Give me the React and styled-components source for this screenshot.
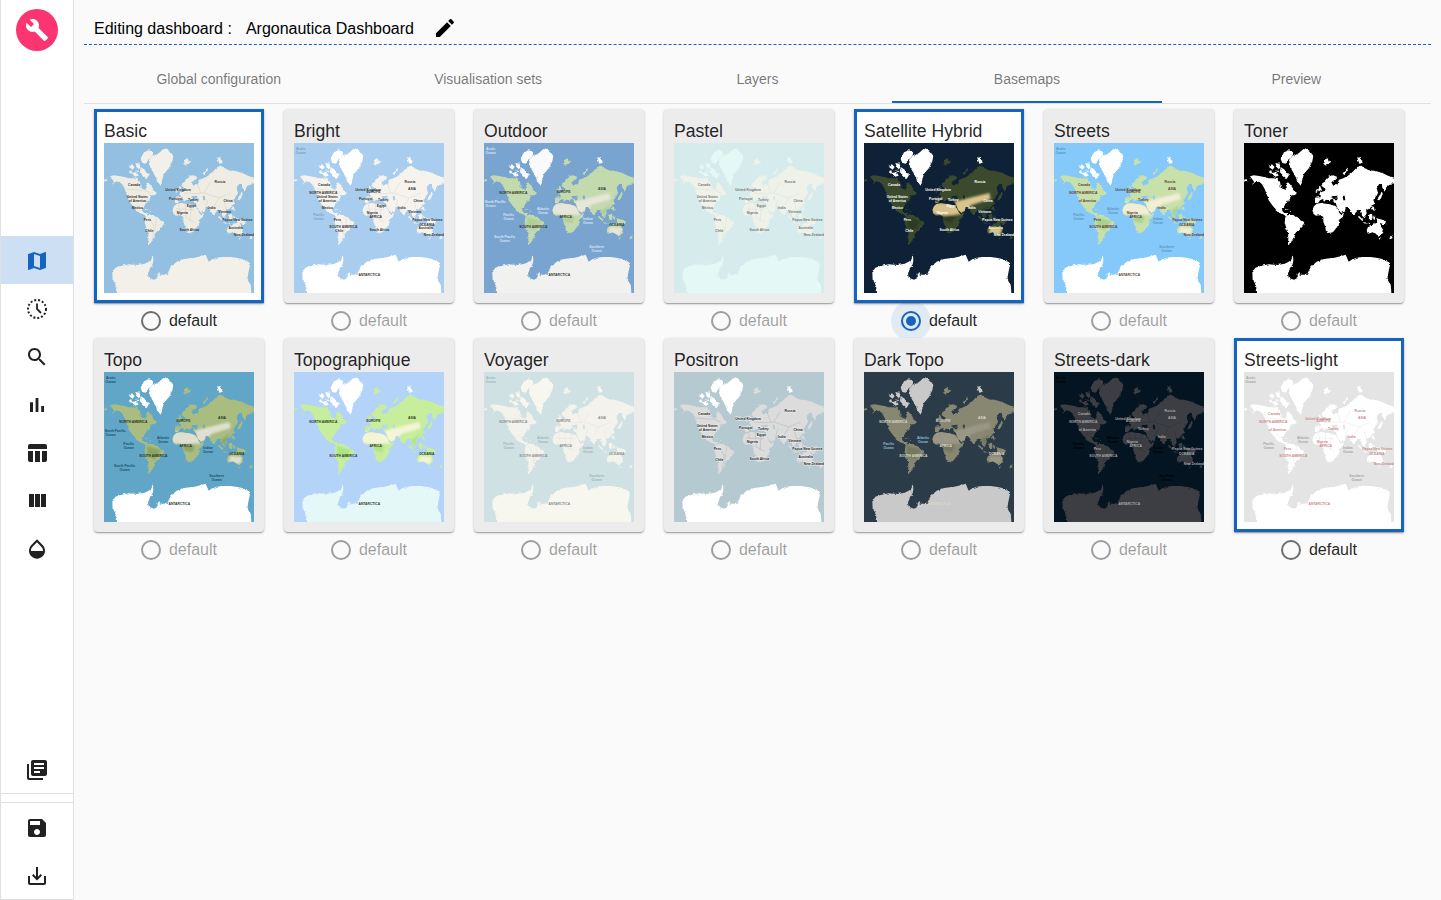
import React from "react";
import styled, { createGlobalStyle } from "styled-components";

const BLUE = "#1565c0";

const GlobalStyle = createGlobalStyle`
  html, body {
    margin: 0;
    padding: 0;
    background: #fafafa;
    font-family: "Liberation Sans", Arial, sans-serif;
    color: rgba(0, 0, 0, 0.87);
  }
  * { box-sizing: border-box; }
`;

const Page = styled.div`
  display: flex;
  height: 900px;
  overflow: hidden;
`;

const Sidebar = styled.aside`
  flex: none;
  width: 74px;
  height: 900px;
  display: flex;
  flex-direction: column;
  background: #fff;
  border-left: 1px solid #e0e0e0;
  border-right: 1px solid #e0e0e0;
  border-bottom: 1px solid #e0e0e0;
`;

const Logo = styled.div`
  width: 42px;
  height: 42px;
  margin: 9px 0 185px 15px;
  border-radius: 50%;
  background: #fb3571;
  color: #fff;
  display: flex;
  align-items: center;
  justify-content: center;
`;

const NavItem = styled.div`
  height: 48px;
  padding-top: 2px;
  display: flex;
  align-items: center;
  justify-content: center;
  color: ${(p) => (p.$active ? BLUE : "#212121")};
  background: ${(p) => (p.$active ? "#cddff2" : "transparent")};
`;

const SidebarBottom = styled.div`
  margin-top: auto;
`;

const UpperTools = styled.div`
  border-bottom: 1px solid #e0e0e0;
`;

const LowerTools = styled.div`
  margin-top: 8px;
  border-top: 1px solid #e0e0e0;
`;

const Main = styled.main`
  flex: 1;
  min-width: 0;
  margin: 0 10px;
`;

const Header = styled.header`
  height: 45px;
  padding: 14px 0 0 10px;
  display: flex;
  align-items: center;
  font-size: 16px;
  color: #000;
  border-bottom: 1px dashed ${BLUE};
`;

const DashboardName = styled.span`
  margin-left: 14px;
`;

const EditButton = styled.span`
  display: flex;
  margin: 0 0 2px 19px;
  color: #000;
`;

const Tabs = styled.nav`
  margin-top: 10px;
  display: flex;
  border-bottom: 1px solid #e0e0e0;
`;

const Tab = styled.div`
  flex: 1;
  height: 48px;
  display: flex;
  align-items: center;
  justify-content: center;
  font-size: 14px;
  color: rgba(0, 0, 0, 0.54);
  border-bottom: 2px solid ${(p) => (p.$active ? BLUE : "transparent")};
  padding-top: 2px;
`;

const Grid = styled.section`
  padding: 5px 0 0 10px;
  display: grid;
  grid-template-columns: repeat(7, 170px);
  grid-auto-rows: 229px;
  column-gap: 20px;
`;

const Card = styled.div`
  position: relative;
  z-index: 1;
  width: 170px;
  height: 194px;
  padding: ${(p) => (p.$picked ? "7px" : "10px")};
  background: ${(p) => (p.$picked ? "#fff" : "#ececec")};
  border: ${(p) => (p.$picked ? `3px solid ${BLUE}` : "none")};
  border-radius: ${(p) => (p.$picked ? "0" : "4px")};
  box-shadow: 0 1px 3px rgba(0, 0, 0, 0.2), 0 1px 1px rgba(0, 0, 0, 0.14), 0 2px 1px -1px rgba(0, 0, 0, 0.12);
`;

const CardTitle = styled.div`
  height: 24px;
  font-size: 17.6px;
  line-height: 24px;
  color: rgba(0, 0, 0, 0.87);
  white-space: nowrap;
`;

const MapSvg = styled.svg`
  display: block;
  width: 150px;
  height: 150px;
`;

const RadioRow = styled.div`
  height: 35px;
  display: flex;
  align-items: center;
  justify-content: center;
  gap: 8px;
  font-size: 16px;
  color: ${(p) => (p.$enabled ? "rgba(0, 0, 0, 0.87)" : "rgba(0, 0, 0, 0.38)")};
`;

const RadioRing = styled.span`
  position: relative;
  flex: none;
  width: 20px;
  height: 20px;
  border-radius: 50%;
  border: 2px solid ${(p) => (p.$checked ? BLUE : p.$enabled ? "#6e6e6e" : "#9e9e9e")};
  display: flex;
  align-items: center;
  justify-content: center;

  ${(p) =>
    p.$checked &&
    `
    &::before {
      content: "";
      position: absolute;
      inset: -12px;
      border-radius: 50%;
      background: rgba(21, 101, 192, 0.1);
    }
    &::after {
      content: "";
      width: 10px;
      height: 10px;
      border-radius: 50%;
      background: ${BLUE};
    }
  `}
`;

const Icon = ({ d, size = 24 }) => (
  <svg width={size} height={size} viewBox="0 0 24 24" fill="currentColor">
    <path d={d} />
  </svg>
);

const ICONS = {
  build: "M22.7 19l-9.1-9.1c.9-2.3.4-5-1.5-6.9-2-2-5-2.4-7.4-1.3L9 6 6 9 1.6 4.7C.4 7.1.9 10.1 2.9 12.1c1.9 1.9 4.6 2.4 6.9 1.5l9.1 9.1c.4.4 1 .4 1.4 0l2.3-2.3c.5-.4.5-1.1.1-1.4z",
  edit: "M3 17.25V21h3.75L17.81 9.94l-3.75-3.75L3 17.25zM20.71 7.04c.39-.39.39-1.02 0-1.41l-2.34-2.34c-.39-.39-1.02-.39-1.41 0l-1.83 1.83 3.75 3.75 1.83-1.83z",
  map: "M20.5 3l-.16.03L15 5.1 9 3 3.36 4.9c-.21.07-.36.25-.36.48V20.5c0 .28.22.5.5.5l.16-.03L9 18.9l6 2.1 5.64-1.9c.21-.07.36-.25.36-.48V3.5c0-.28-.22-.5-.5-.5zM15 19l-6-2.11V5l6 2.11V19z",
  search: "M15.5 14h-.79l-.28-.27C15.41 12.59 16 11.11 16 9.5 16 5.91 13.09 3 9.5 3S3 5.91 3 9.5 5.91 16 9.5 16c1.61 0 3.09-.59 4.23-1.57l.27.28v.79l5 4.99L20.49 19l-4.99-5zm-6 0C7.01 14 5 11.99 5 9.5S7.01 5 9.5 5 14 7.01 14 9.5 11.99 14 9.5 14z",
  bars: "M5 9.2h3V19H5zM10.6 5h2.8v14h-2.8zm5.6 8H19v6h-2.8z",
  table: "M10 10.02h5V21h-5zM17 21h3c1.1 0 2-.9 2-2v-9h-5v11zm3-18H5c-1.1 0-2 .9-2 2v3h19V5c0-1.1-.9-2-2-2zM3 19c0 1.1.9 2 2 2h3V10H3v9z",
  columns: "M10 18h5V5h-5v13zm-6 0h5V5H4v13zM16 5v13h5V5h-5z",
  opacity: "M17.66 8L12 2.35 6.34 8C4.78 9.56 4 11.64 4 13.64s.78 4.11 2.34 5.67 3.61 2.35 5.66 2.35 4.1-.79 5.66-2.35S20 15.64 20 13.64 19.22 9.56 17.66 8zM6 14c.01-2 .62-3.27 1.76-4.4L12 5.27l4.24 4.38C17.38 10.77 17.99 12 18 14H6z",
  library: "M4 6H2v14c0 1.1.9 2 2 2h14v-2H4V6zm16-4H8c-1.1 0-2 .9-2 2v12c0 1.1.9 2 2 2h12c1.1 0 2-.9 2-2V4c0-1.1-.9-2-2-2zm-1 9H9V9h10v2zm-4 4H9v-2h6v2zm4-8H9V5h10v2z",
  save: "M17 3H5c-1.11 0-2 .9-2 2v14c0 1.1.89 2 2 2h14c1.1 0 2-.9 2-2V7l-4-4zm-5 16c-1.66 0-3-1.34-3-3s1.34-3 3-3 3 1.34 3 3-1.34 3-3 3zm3-10H5V5h10v4z",
  download: "M19 12v7H5v-7H3v7c0 1.1.9 2 2 2h14c1.1 0 2-.9 2-2v-7h-2zm-6 .67l2.59-2.58L17 11.5l-5 5-5-5 1.41-1.41L11 12.67V3h2z",
};

// dotted circle with clock hands, not in the usual icon sets
const DottedClock = () => (
  <svg width="24" height="24" viewBox="0 0 24 24" fill="none" stroke="currentColor">
    <circle cx="12" cy="12" r="9" strokeWidth="2" strokeDasharray="2 1.93" />
    <path d="M12 6.5V12l4 4" strokeWidth="1.8" />
  </svg>
);

// continents in a 450 unit square, traced off the toner tile
const LAND =
  "M18,100 L30,97 L45,99 L60,102 L72,106 L88,106 L100,108 L108,116 L110,128 L120,138 L128,134 L126,122 L132,118 L140,126 L148,138 L158,152 L151,157 L143,157 L137,166 L131,173 L127,183 L121,188 L118,196 L112,198 L118,208 L128,210 L136,222 L128,222 L118,216 L108,210 L96,200 L86,188 L74,172 L68,154 L62,138 L54,124 L46,116 L34,118 L24,124 L30,116 Z " +
  "M0,110 L8,108 L10,116 L2,118 Z " +
  "M118,195 L135,200 L125,200 Z M137,204 L146,205 L140,208 Z " +
  "M124,226 L134,216 L148,216 L158,224 L170,230 L181,238 L176,250 L166,262 L156,268 L152,280 L144,292 L138,306 L132,304 L133,285 L132,265 L126,252 L122,238 Z " +
  "M212,172 L216,164 L228,162 L226,152 L234,146 L242,144 L240,134 L232,128 L240,116 L252,102 L266,96 L280,102 L272,110 L262,118 L268,128 L280,122 L285,110 L298,106 L312,98 L325,88 L340,72 L352,68 L362,76 L378,82 L395,84 L415,90 L432,98 L470,110 L470,120 L438,122 L428,130 L422,146 L414,132 L418,122 L405,124 L398,136 L402,150 L396,162 L388,170 L392,182 L380,190 L372,200 L366,198 L368,212 L362,226 L354,218 L352,205 L344,200 L336,208 L330,215 L322,208 L314,192 L305,192 L302,204 L292,210 L282,200 L276,184 L270,178 L266,172 L278,172 L282,166 L268,166 L256,172 L246,170 L240,176 L236,168 L228,172 L222,180 L214,180 Z " +
  "M205,200 L210,190 L218,182 L232,180 L244,182 L258,184 L270,188 L278,196 L284,208 L290,214 L300,210 L296,222 L284,232 L282,246 L276,256 L268,266 L254,270 L246,266 L244,252 L238,236 L238,222 L230,216 L216,218 L208,212 Z " +
  "M280,238 L286,232 L284,250 L278,254 Z " +
  "M222,140 L228,128 L234,142 L226,148 Z M216,140 L221,138 L220,146 L215,146 Z " +
  "M240,50 L252,46 L258,56 L246,68 L238,62 Z M296,92 L308,74 L312,76 L302,96 Z " +
  "M400,170 L408,158 L412,146 L416,150 L412,164 L404,174 Z M414,112 L419,112 L418,128 L414,128 Z " +
  "M384,190 L390,192 L392,205 L386,200 Z M345,218 L358,232 L355,234 L342,222 Z M358,238 L378,240 L378,243 L358,241 Z " +
  "M372,216 L384,212 L386,226 L376,232 Z M388,218 L394,218 L392,232 L388,228 Z M398,226 L420,232 L428,244 L414,242 L400,236 Z " +
  "M368,262 L372,252 L385,248 L390,238 L398,240 L404,232 L410,245 L417,258 L414,270 L404,278 L396,274 L386,268 L372,272 Z " +
  "M404,282 L410,282 L408,288 Z M438,284 L446,276 L444,286 L436,292 Z";

const NORTH_ICE =
  "M135,50 L150,38 L165,30 L178,18 L195,22 L208,38 L205,55 L195,75 L180,92 L170,128 L162,118 L150,92 L138,72 Z " +
  "M340,45 L350,42 L356,60 L346,62 Z " +
  "M72,70 L84,64 L92,72 L86,80 Z M94,60 L106,62 L110,72 L100,76 Z M110,72 L122,80 L135,96 L128,108 L118,98 L108,88 Z M82,90 L98,88 L104,98 L90,102 Z M76,84 L82,82 L84,90 L76,92 Z M98,80 L104,80 L106,86 L98,86 Z M110,48 L120,28 L135,22 L148,28 L145,42 L132,50 L125,62 L115,60 Z";

const SOUTH_ICE =
  "M25,388 L34,374 L52,368 L75,364 L100,366 L122,362 L134,356 L142,350 L146,333 L148,352 L146,364 L136,378 L132,392 L134,404 L150,410 L162,404 L172,392 L190,392 L200,372 L218,356 L240,348 L268,345 L290,340 L305,335 L314,356 L326,348 L350,342 L380,342 L405,346 L428,352 L438,366 L434,385 L430,405 L440,425 L444,470 L42,470 L36,425 L26,410 Z " +
  "M158,392 L168,388 L166,404 L158,404 Z";

const INLAND_WATER =
  "M262,160 L282,158 L284,164 L266,165 Z M296,158 L302,158 L304,172 L298,172 Z M108,132 L122,128 L128,134 L120,140 Z";

const DESERT =
  "M200,178 L280,182 L292,214 L240,218 L205,212 Z M272,176 L312,166 L376,150 L380,168 L322,186 L308,204 L290,212 Z M378,252 L416,256 L408,276 L374,272 Z";

const FOREST =
  "M128,222 L172,234 L152,262 L130,252 Z M234,216 L272,216 L266,240 L242,236 Z M350,205 L385,180 L395,160 L372,196 L362,224 Z";

const BORDERS =
  "M56,124 L64,138 L120,142 L140,150 M96,188 L118,198 M136,225 L150,250 L146,290 M158,224 L152,268 M222,180 L230,214 M244,182 L246,224 L272,238 M262,186 L258,236 M216,198 L270,200 M240,150 L272,152 L300,150 L345,165 L380,150 M300,150 L318,118 M305,192 L312,170 M345,165 L330,190 M362,178 L366,198 M280,122 L290,150";

const CONTINENTS = [
  ["NORTH AMERICA", 88, 152],
  ["SOUTH AMERICA", 148, 254],
  ["EUROPE", 238, 151],
  ["AFRICA", 245, 224],
  ["ASIA", 354, 142],
  ["OCEANIA", 398, 249],
  ["ANTARCTICA", 226, 398],
];

const COUNTRIES = [
  ["Canada", 90, 130],
  ["United States", 100, 165],
  ["of America", 100, 177],
  ["Mexico", 100, 199],
  ["Peru", 130, 234],
  ["Chile", 136, 268],
  ["United Kingdom", 222, 144],
  ["Portugal", 215, 172],
  ["Turkey", 268, 173],
  ["Egypt", 262, 193],
  ["Nigeria", 235, 214],
  ["South Africa", 256, 264],
  ["Russia", 348, 119],
  ["China", 372, 178],
  ["India", 323, 198],
  ["Vietnam", 362, 211],
  ["Papua New Guinea", 400, 234],
  ["Australia", 395, 259],
  ["New Zealand", 420, 280],
];

const OCEANS = [
  ["Arctic", 20, 20],
  ["Ocean", 20, 32],
  ["Pacific", 74, 220],
  ["Ocean", 74, 232],
  ["Atlantic", 177, 201],
  ["Ocean", 177, 213],
  ["Indian", 312, 232],
  ["Ocean", 312, 244],
  ["Southern", 338, 314],
  ["Ocean", 338, 326],
];

const SOUTH_SEAS = [
  ["South Pacific", 62, 284],
  ["Ocean", 62, 296],
  ["North Pacific", 34, 180],
  ["Ocean", 20, 192],
];

const MIXED = [...CONTINENTS, ...COUNTRIES.filter((_, i) => i % 2 === 0), ...OCEANS];

// one entry per basemap tile: colours, then what is printed on it
const BASEMAPS = [
  { name: "Basic", picked: true, enabled: true, water: "#93c0e0", land: "#efede3", ice: "#f2f0e8", text: "#333", border: "#c9c7bb", labels: COUNTRIES },
  { name: "Bright", water: "#a9cdee", land: "#f5f3ec", ice: "#fff", text: "#333", border: "#d8cfd8", labels: [...CONTINENTS, ...COUNTRIES, ...OCEANS.slice(0, 4)], ocean: "#7d9fc0" },
  { name: "Outdoor", water: "#78a4cf", land: "#c3d9ae", desert: "#e8e6d8", forest: "#b0cf99", ice: "#fafafa", south: "#f1f2f0", text: "#2f3a2a", labels: [...CONTINENTS, ...SOUTH_SEAS, ...OCEANS], ocean: "#d7e5f2" },
  { name: "Pastel", water: "#d6ebec", land: "#eff2e9", ice: "#e4f8f6", text: "#777", border: "#dcd9d0", labels: COUNTRIES },
  { name: "Satellite Hybrid", picked: true, checked: true, enabled: true, water: "#0e2136", land: "#3b4a2d", desert: "#d8c38b", forest: "#2c3b24", ice: "#fff", text: "#fff", labels: COUNTRIES },
  { name: "Streets", water: "#84c9f9", land: "#c8e0a9", desert: "#f1eed4", forest: "#a9d18f", ice: "#fff", text: "#5e3a3a", labels: MIXED, ocean: "#5b94c0" },
  { name: "Toner", water: "#000", land: "#fff", ice: "#fff", labels: [] },
  { name: "Topo", water: "#62a6c7", land: "#a9bd80", desert: "#e0dfd0", forest: "#8ba566", ice: "#fff", text: "#2a3320", labels: [...CONTINENTS, ...SOUTH_SEAS, ...OCEANS], ocean: "#1f4d68" },
  { name: "Topographique", water: "#b4d3f8", land: "#c6ee9d", desert: "#f4f4d6", forest: "#aee388", ice: "#fff", south: "#e5f8f8", text: "#2c3a20", labels: CONTINENTS, ocean: "#7fa3cc" },
  { name: "Voyager", water: "#cfe1e3", land: "#f3f2ec", ice: "#f7f6ef", text: "#8a8f8c", border: "#e6dcd8", labels: [...CONTINENTS, ...OCEANS], ocean: "#9db6ba" },
  { name: "Positron", water: "#b5c9d1", land: "#dcdcdc", ice: "#fff", text: "#222", halo: "#eee", border: "#aaa", labels: COUNTRIES },
  { name: "Dark Topo", water: "#2b3b48", land: "#878772", desert: "#9b9785", forest: "#74775f", ice: "#c9c9c9", text: "#d8d8cc", labels: [...CONTINENTS, ...OCEANS.slice(2, 6)], ocean: "#8fc0dc" },
  { name: "Streets-dark", water: "#041421", land: "#3c3e43", ice: "#3c3e43", text: "#a9a9a9", border: "#2c2e33", labels: MIXED, ocean: "#000" },
  { name: "Streets-light", picked: true, enabled: true, water: "#e4e4e4", land: "#fff", ice: "#fff", text: "#c88a8a", border: "#e2dede", labels: MIXED, ocean: "#a5a5a5" },
];

const WorldMap = ({ map, id }) => {
  const landId = `land-${id}`;
  const roughId = `rough-${id}`;
  const softId = `soft-${id}`;
  const isOcean = (label) => OCEANS.includes(label) || SOUTH_SEAS.includes(label);

  return (
    <MapSvg viewBox="0 0 450 450">
      <defs>
        <clipPath id={landId}>
          <path d={LAND} />
        </clipPath>
        <filter id={roughId} filterUnits="userSpaceOnUse" x="-20" y="-20" width="490" height="490" colorInterpolationFilters="sRGB">
          <feTurbulence type="fractalNoise" baseFrequency="0.09" numOctaves="3" seed="4" result="noise" />
          <feDisplacementMap in="SourceGraphic" in2="noise" scale="9" xChannelSelector="R" yChannelSelector="G" />
          <feGaussianBlur stdDeviation="0.7" />
        </filter>
        <filter id={softId}>
          <feGaussianBlur stdDeviation="3" />
        </filter>
      </defs>
      <rect width="450" height="450" fill={map.water} />
      <g filter={`url(#${roughId})`}>
        <path d={LAND} fill={map.land} />
        <path d={NORTH_ICE} fill={map.ice} />
        <path d={SOUTH_ICE} fill={map.south || map.ice} />
        <path d={INLAND_WATER} fill={map.water} />
      </g>
      {(map.desert || map.forest) && (
        <g clipPath={`url(#${landId})`}>
          <g filter={`url(#${softId})`}>
            {map.forest && <path d={FOREST} fill={map.forest} />}
            {map.desert && <path d={DESERT} fill={map.desert} />}
          </g>
        </g>
      )}
      {map.border && <path d={BORDERS} fill="none" stroke={map.border} strokeWidth="1.2" />}
      {map.labels.length > 0 && (
        <g fontFamily='"Liberation Sans", Arial, sans-serif' fontWeight="700" fontSize="10" textAnchor="middle">
          {map.labels.map((label) => (
            <text
              key={`${label[0]}-${label[1]}-${label[2]}`}
              x={label[1]}
              y={label[2]}
              fill={isOcean(label) && map.ocean ? map.ocean : map.text}
              stroke={map.halo || "none"}
              strokeWidth={map.halo ? 2.5 : 0}
              paintOrder="stroke"
            >
              {label[0]}
            </text>
          ))}
        </g>
      )}
    </MapSvg>
  );
};

const BasemapTile = ({ map, id }) => (
  <div>
    <Card $picked={map.picked}>
      <CardTitle>{map.name}</CardTitle>
      <WorldMap map={map} id={id} />
    </Card>
    <RadioRow $enabled={map.enabled}>
      <RadioRing $enabled={map.enabled} $checked={map.checked} />
      default
    </RadioRow>
  </div>
);

const NAV = ["map", "clock", "search", "bars", "table", "columns", "opacity"];
const TABS = ["Global configuration", "Visualisation sets", "Layers", "Basemaps", "Preview"];

const App = () => (
  <Page>
    <GlobalStyle />
    <Sidebar>
      <Logo>
        <Icon d={ICONS.build} size={24} />
      </Logo>
      {NAV.map((name, i) => (
        <NavItem key={name} $active={i === 0}>
          {name === "clock" ? <DottedClock /> : <Icon d={ICONS[name]} />}
        </NavItem>
      ))}
      <SidebarBottom>
        <UpperTools>
          <NavItem>
            <Icon d={ICONS.library} />
          </NavItem>
        </UpperTools>
        <LowerTools>
          <NavItem>
            <Icon d={ICONS.save} />
          </NavItem>
          <NavItem>
            <Icon d={ICONS.download} />
          </NavItem>
        </LowerTools>
      </SidebarBottom>
    </Sidebar>
    <Main>
      <Header>
        <span>Editing dashboard :</span>
        <DashboardName>Argonautica Dashboard</DashboardName>
        <EditButton>
          <Icon d={ICONS.edit} />
        </EditButton>
      </Header>
      <Tabs>
        {TABS.map((tab) => (
          <Tab key={tab} $active={tab === "Basemaps"}>
            {tab}
          </Tab>
        ))}
      </Tabs>
      <Grid>
        {BASEMAPS.map((map, i) => (
          <BasemapTile key={map.name} map={map} id={i} />
        ))}
      </Grid>
    </Main>
  </Page>
);

export default App;
